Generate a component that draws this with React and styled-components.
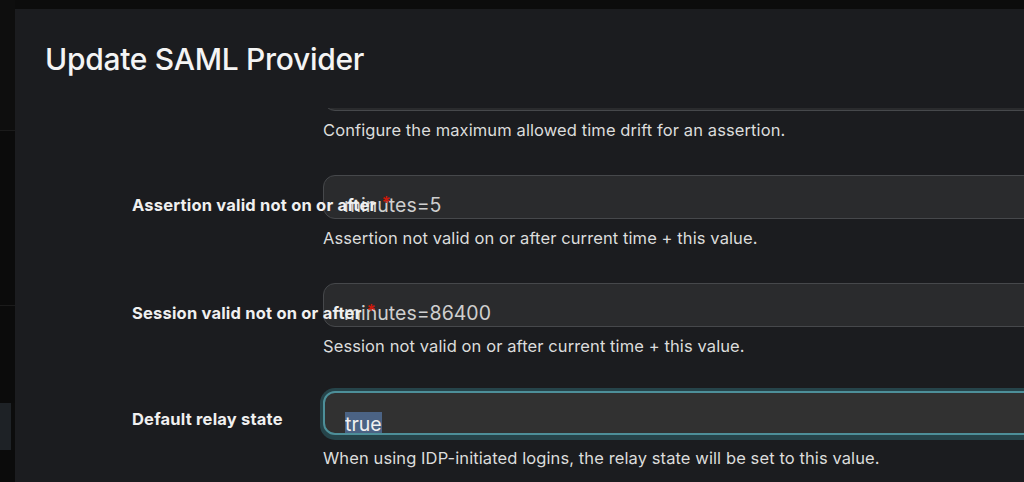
import React from 'react';
import styled, { createGlobalStyle } from 'styled-components';

const Global = createGlobalStyle`
  html, body { margin: 0; padding: 0; background: #0c0c0c; overflow: hidden; }
  body { font-family: Inter, "Noto Sans", sans-serif; -webkit-font-smoothing: antialiased; }
`;

const Page = styled.div`
  display: flex;
  width: 1024px;
  height: 482px;
  overflow: hidden;
  background: #0c0c0c;
`;

const Backdrop = styled.div`
  flex: 0 0 15px;
  display: flex;
  flex-direction: column;
`;

const BackdropBlock = styled.div`
  height: ${p => p.$h}px;
  width: ${p => p.$w || '15px'};
  background: ${p => p.$bg || '#0b0b0b'};
  border-bottom: ${p => (p.$line ? '1px solid #1b1b1b' : 'none')};
  flex: 0 0 auto;
`;

const Modal = styled.section`
  flex: 0 0 1100px;
  margin-top: 9px;
  background: #1b1c1f;
  display: flex;
  flex-direction: column;
  overflow: hidden;
`;

const Header = styled.header`
  flex: 0 0 99px;
  padding: 32px 30px 0;
  box-sizing: border-box;
  position: relative;
  z-index: 2;
  background: #1b1c1f;
`;

const Title = styled.h1`
  margin: 0;
  font-size: 30px;
  line-height: 36px;
  font-weight: 500;
  color: #f4f4f4;
  letter-spacing: -0.3px;
`;

const Body = styled.div`
  flex: 1;
  overflow: hidden;
  padding-left: 117px;
`;

const Form = styled.div`
  margin-top: -41px;
  display: flex;
  flex-direction: column;
  gap: 33px;
`;

const Row = styled.div`
  display: grid;
  grid-template-columns: 191px 1fr;
`;

const Label = styled.label`
  position: relative;
  z-index: 1;
  padding-top: 16px;
  font-size: 16.5px;
  line-height: 24px;
  font-weight: 700;
  letter-spacing: 0.2px;
  color: #f0f0f0;
  white-space: nowrap;
`;

const Required = styled.span`
  color: #c9190b;
  margin-left: 5px;
  font-size: 17px;
  font-weight: 700;
  vertical-align: 2px;
`;

const Field = styled.div`
  display: flex;
  flex-direction: column;
`;

const Input = styled.input`
  box-sizing: border-box;
  height: 44px;
  width: 100%;
  margin: 0;
  padding: ${p => (p.$focused ? '21px 20px 0 20px' : '16px 20px 0 20px')};
  border: ${p => (p.$focused ? '2px solid #4d8f99' : '1px solid #46484b')};
  border-radius: 12px;
  background: ${p => (p.$focused ? '#313131' : '#2a2b2d')};
  box-shadow: ${p => (p.$focused ? '0 0 0 3px #26444a, 0 2px 0 3px #26444a' : 'none')};
  margin-bottom: ${p => (p.$focused ? '3px' : '0')};
  color: #cfcfcf;
  font-family: inherit;
  font-size: 19.5px;
  line-height: 24px;
  outline: none;
  &::selection { background: #4b6384; color: #f0f0f0; }
`;

const Helper = styled.div`
  margin-top: ${p => (p.$focused ? '8px' : '7px')};
  font-size: 16.5px;
  letter-spacing: 0.1px;
  line-height: 24px;
  color: #dcdcdc;
`;

const rows = [
  { label: '', value: '', help: 'Configure the maximum allowed time drift for an assertion.' },
  { label: 'Assertion valid not on or after', required: true, value: 'minutes=5', help: 'Assertion not valid on or after current time + this value.' },
  { label: 'Session valid not on or after', required: true, value: 'minutes=86400', help: 'Session not valid on or after current time + this value.' },
  { label: 'Default relay state', value: 'true', focused: true, help: 'When using IDP-initiated logins, the relay state will be set to this value.' },
];

export default function App() {
  const focusRef = React.useRef(null);
  React.useEffect(() => {
    const el = focusRef.current;
    if (el) {
      el.focus({ preventScroll: true });
      el.setSelectionRange(0, el.value.length);
    }
  }, []);
  return (
    <>
      <Global />
      <Page>
        <Backdrop>
          <BackdropBlock $h={130} $bg="#0e0e0e" $line />
          <BackdropBlock $h={174} $line />
          <BackdropBlock $h={97} />
          <BackdropBlock $h={47} $w="11px" $bg="#1e2226" />
          <BackdropBlock $h={33} />
        </Backdrop>
        <Modal>
          <Header>
            <Title>Update SAML Provider</Title>
          </Header>
          <Body>
            <Form>
              {rows.map((r, i) => (
                <Row key={i}>
                  <Label>
                    {r.label}
                    {r.required && <Required>*</Required>}
                  </Label>
                  <Field>
                    <Input
                      ref={r.focused ? focusRef : undefined}
                      $focused={r.focused}
                      defaultValue={r.value}
                      readOnly={!r.focused}
                    />
                    <Helper $focused={r.focused}>{r.help}</Helper>
                  </Field>
                </Row>
              ))}
            </Form>
          </Body>
        </Modal>
      </Page>
    </>
  );
}
